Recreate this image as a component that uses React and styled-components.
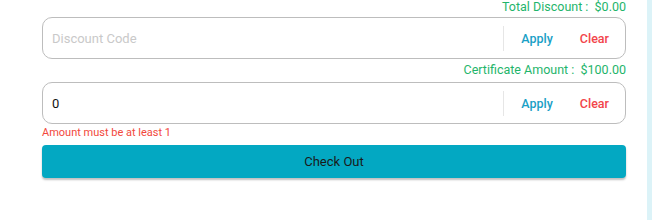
import React from "react"
import styled, { createGlobalStyle } from "styled-components"

const GlobalStyle = createGlobalStyle`
  body {
    margin: 0;
    background: #ffffff;
    font-family: Roboto, "Liberation Sans", sans-serif;
  }
`

const Page = styled.div`
  display: flex;
  min-height: 220px;
`

const Main = styled.div`
  flex: 1;
  padding: 0 21px 0 42px;
  display: flex;
  flex-direction: column;
`

const SideStrip = styled.div`
  width: 5px;
  background: #dcf3f8;
`

const SummaryLine = styled.div`
  font-size: 12.5px;
  line-height: 14px;
  height: 14px;
  color: #1fb56b;
  text-align: right;
  margin: ${(p) => (p.first ? "0 0 3px" : "4px 0 5px")};
  white-space: pre;
`

const CodeBox = styled.div`
  box-sizing: border-box;
  height: 42px;
  display: flex;
  align-items: center;
  border: 1px solid #bdbdbd;
  border-radius: 10px;
  padding: 0 16px 0 9px;
`

const CodeInput = styled.input`
  flex: 1;
  border: none;
  outline: none;
  background: transparent;
  font-family: Roboto, "Liberation Sans", sans-serif;
  font-size: 13px;
  color: #111;
  padding: 0;

  &::placeholder {
    color: #c9c9c9;
  }
`

const Divider = styled.div`
  width: 1px;
  height: 25px;
  background: #e6e6e6;
`

const LinkButton = styled.button`
  border: none;
  background: none;
  padding: 0;
  margin-left: ${(p) => p.offset}px;
  font-family: Roboto, "Liberation Sans", sans-serif;
  font-size: 12.5px;
  font-weight: 500;
  color: ${(p) => (p.danger ? "#f2454b" : "#1aa0c6")};
  cursor: pointer;
`

const ErrorText = styled.div`
  font-size: 11px;
  line-height: 13px;
  color: #f2483c;
  margin: 2px 0 6px;
`

const CheckOutButton = styled.button`
  height: 33px;
  border: none;
  border-radius: 4px;
  background: #03a8c2;
  box-shadow: 0 2px 2px rgba(0, 0, 0, 0.25);
  font-family: Roboto, "Liberation Sans", sans-serif;
  font-size: 13px;
  color: #1a1a1a;
  cursor: pointer;
`

const CodeField = ({ placeholder, value }) => (
  <CodeBox>
    <CodeInput placeholder={placeholder} defaultValue={value} />
    <Divider />
    <LinkButton offset={17}>Apply</LinkButton>
    <LinkButton offset={27} danger>
      Clear
    </LinkButton>
  </CodeBox>
)

export default function App() {
  return (
    <Page>
      <GlobalStyle />
      <Main>
        <SummaryLine first>{"Total Discount :  $0.00"}</SummaryLine>
        <CodeField placeholder="Discount Code" />
        <SummaryLine>{"Certificate Amount :  $100.00"}</SummaryLine>
        <CodeField value="0" />
        <ErrorText>Amount must be at least 1</ErrorText>
        <CheckOutButton>Check Out</CheckOutButton>
      </Main>
      <SideStrip />
    </Page>
  )
}
